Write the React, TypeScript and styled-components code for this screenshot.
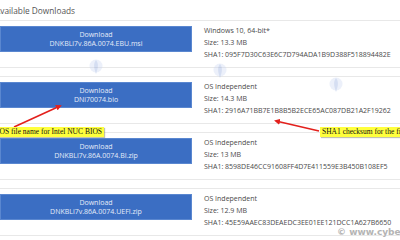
import React from 'react';
import styled, { createGlobalStyle } from 'styled-components';

const GlobalStyle = createGlobalStyle`
  html, body {
    margin: 0;
    padding: 0;
    background: #fff;
    overflow: hidden;
  }
  body {
    width: 400px;
    height: 240px;
  }
`;

const Page = styled.div`
  position: relative;
  width: 400px;
  height: 240px;
  overflow: hidden;
  font-family: 'Open Sans', 'Liberation Sans', sans-serif;
`;

const Title = styled.h2`
  margin: 0 0 0 -5px;
  height: 20px;
  line-height: 22px;
  font-size: 8.3px;
  font-weight: 400;
  color: #555;
`;

const List = styled.div`
  display: flex;
  flex-direction: column;
  gap: 8px;
  width: 440px;
`;

const Row = styled.div`
  display: flex;
  gap: 12px;
  height: 46px;
  border-top: 1px solid #e8e8e8;
  border-bottom: 1px solid #e8e8e8;
`;

const DownloadButton = styled.a`
  display: flex;
  flex-direction: column;
  align-items: center;
  justify-content: center;
  box-sizing: border-box;
  width: 192px;
  height: 26px;
  margin-top: 5px;
  background: #3b6ec3;
  border: 1px solid #5a87d0;
  color: #e4ecf8;
  font-size: 7px;
  line-height: 9px;
  text-decoration: none;
`;

const Info = styled.div`
  display: flex;
  flex-direction: column;
  padding-top: 4px;
  font-size: 7px;
  line-height: 12px;
  color: #4a4a4a;
`;

const Note = styled.div<{ $left: number; $top: number }>`
  position: absolute;
  left: ${(p) => p.$left}px;
  top: ${(p) => p.$top}px;
  padding: 0 2px;
  height: 10px;
  line-height: 10px;
  background: #ffff3c;
  box-shadow: 1px 1px 1px rgba(120, 120, 80, 0.45);
  font-family: 'Liberation Serif', serif;
  font-size: 7.5px;
  color: #111;
  white-space: nowrap;
`;

const Arrows = styled.svg`
  position: absolute;
  left: 0;
  top: 0;
  pointer-events: none;
`;

const Watermark = styled.div`
  position: absolute;
  left: 337px;
  top: 227px;
  font-family: 'DejaVu Sans', sans-serif;
  font-size: 9px;
  font-weight: 700;
  color: #b4b4b4;
  white-space: nowrap;
`;

const Faint = styled.svg<{ $left: number; $top: number }>`
  position: absolute;
  left: ${(p) => p.$left}px;
  top: ${(p) => p.$top}px;
  opacity: 0.35;
`;

const files = [
  { name: 'DNKBLi7v.86A.0074.EBU.msi', os: 'Windows 10, 64-bit*', size: '13.3 MB', sha: '095F7D30C63E6C7D794ADA1B9D388F518894482E' },
  { name: 'DNi70074.bio', os: 'OS Independent', size: '14.3 MB', sha: '2916A71BB7E1B8B5B2ECE65AC087DB21A2F19262' },
  { name: 'DNKBLi7v.86A.0074.BI.zip', os: 'OS Independent', size: '13 MB', sha: '8598DE46CC91608FF4D7E411559E3B450B108EF5' },
  { name: 'DNKBLi7v.86A.0074.UEFI.zip', os: 'OS Independent', size: '12.9 MB', sha: '45E59AAEC83DEAEDC3EE01EE121DCC1A627B6650' },
];

const Mark = ({ left, top }: { left: number; top: number }) => (
  <Faint $left={left} $top={top} width="14" height="18" viewBox="0 0 14 18">
    <circle cx="7" cy="8" r="6.5" fill="#c9d6f2" />
    <path d="M7 2 C4 6 5 10 7 16 C9 10 10 6 7 2 Z" fill="#8aa3dc" />
  </Faint>
);

const App: React.FC = () => {
  return (
    <>
      <GlobalStyle />
      <Page>
        <Title>Available Downloads</Title>
        <List>
          {files.map((f) => (
            <Row key={f.name}>
              <DownloadButton href="#">
                <span>Download</span>
                <span>{f.name}</span>
              </DownloadButton>
              <Info>
                <span>{f.os}</span>
                <span>Size: {f.size}</span>
                <span>SHA1: {f.sha}</span>
              </Info>
            </Row>
          ))}
        </List>

        <Mark left={89} top={58} />
        <Mark left={213} top={62} />
        <Mark left={329} top={76} />

        <Arrows width="400" height="240" viewBox="0 0 400 240">
          <defs>
            <marker id="head" markerWidth="6" markerHeight="6" refX="4" refY="3" orient="auto" markerUnits="userSpaceOnUse">
              <path d="M0 0 L6 3 L0 6 Z" fill="#e3201c" />
            </marker>
          </defs>
          <line x1="14" y1="127" x2="60" y2="106" stroke="#e3201c" strokeWidth="1.6" markerEnd="url(#head)" />
          <line x1="319" y1="131" x2="276" y2="121" stroke="#e3201c" strokeWidth="1.6" markerEnd="url(#head)" />
        </Arrows>

        <Note $left={-10} $top={127}>BIOS file name for Intel NUC BIOS</Note>
        <Note $left={320} $top={127}>SHA1 checksum for the file</Note>

        <Watermark>© www.cyberciti.biz</Watermark>
      </Page>
    </>
  );
};

export default App;
